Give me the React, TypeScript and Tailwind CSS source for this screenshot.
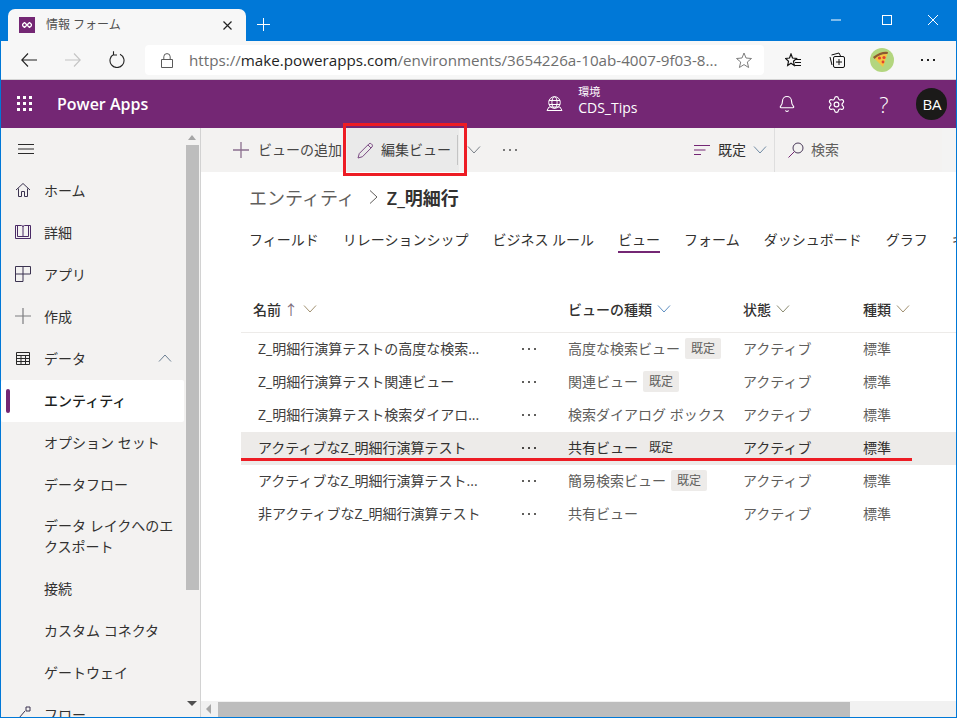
import React from "react";
import { Bell, Settings } from "lucide-react";

const FONT = "font-['Segoe_UI','Open_Sans','Noto_Sans_CJK_JP',sans-serif]";

function Chevron({ up = false, color = "#71808f", w = 14 }: { up?: boolean; color?: string; w?: number }) {
  return (
    <svg width={w} height="8" viewBox="0 0 14 8" className="shrink-0">
      <polyline points={up ? "1,7.5 7,1 13,7.5" : "1,0.5 7,7 13,0.5"} fill="none" stroke={color} strokeWidth="1" />
    </svg>
  );
}

function Dots({ color = "#605e5c" }: { color?: string }) {
  return (
    <svg width="16" height="4" viewBox="0 0 16 4">
      <rect x="1" y="1" width="2" height="2" fill={color} />
      <rect x="7" y="1" width="2" height="2" fill={color} />
      <rect x="13" y="1" width="2" height="2" fill={color} />
    </svg>
  );
}

function NavIcon({ name }: { name: string }) {
  const s = { fill: "none", stroke: "#3b3350", strokeWidth: 1 };
  if (name === "home")
    return (
      <svg width="16" height="16" viewBox="0 0 16 16">
        <path d="M1 8 L8 1.5 L15 8 M3.5 6.5 V14.5 H6.5 V9.5 H9.5 V14.5 H12.5 V6.5" {...s} />
      </svg>
    );
  if (name === "book")
    return (
      <svg width="16" height="16" viewBox="0 0 16 16">
        <path d="M.5 1.5 H6.5 Q8 1.5 8 3 V13 M15.5 1.5 H9.5 Q8 1.5 8 3 M.5 1.5 V14.5 H15.5 V1.5 M2.5 1.5 V12.5 H13.5 V1.5" fill="none" stroke="#4a2a66" strokeWidth="1" />
      </svg>
    );
  if (name === "app")
    return (
      <svg width="16" height="16" viewBox="0 0 16 16">
        <path d="M.5 .5 H15.5 V8 H8 V15.5 H.5 Z M.5 8 H8 M8 .5 V8" {...s} />
      </svg>
    );
  if (name === "plus")
    return (
      <svg width="16" height="16" viewBox="0 0 16 16">
        <path d="M8 0 V16 M0 8 H16" fill="none" stroke="#7d7d80" strokeWidth="1.2" />
      </svg>
    );
  if (name === "data")
    return (
      <svg width="14" height="13" viewBox="0 0 14 13">
        <path d="M.5 .5 H13.5 V12.5 H.5 Z M.5 3.5 H13.5 M.5 6.5 H13.5 M.5 9.5 H13.5 M5 3.5 V12.5 M9.5 3.5 V12.5" fill="none" stroke="#292929" strokeWidth="1" />
      </svg>
    );
  if (name === "flow")
    return (
      <svg width="16" height="16" viewBox="0 0 16 16">
        <path d="M1 12 H4 L10 5 M11 1 H15 V5 H11 Z" {...s} />
      </svg>
    );
  return null;
}

function NavRow({ icon, label, active, chev, h = "h-[42px]" }: { icon?: string; label: string; active?: boolean; chev?: boolean; h?: string }) {
  return (
    <div className={`relative shrink-0 flex items-center pb-[2px] ${h} ${active ? "bg-white rounded-[2px] font-medium text-[#201f1e] mr-[1px]" : "text-[#323130]"} text-[14px] leading-[21px]`}>
      {active && <span className="absolute left-[5px] top-[9px] w-[4px] h-[24px] rounded-full bg-[#742774]" />}
      <span className="w-[43px] shrink-0 flex justify-center pl-[9px] pr-[8px]">{icon && <NavIcon name={icon} />}</span>
      <span className="flex-1 pr-[7px]">{label}</span>
      {chev && (
        <span className="mr-[13px]">
          <Chevron up color="#6b7f93" />
        </span>
      )}
    </div>
  );
}

function Sidebar() {
  return (
    <div className="relative w-[199px] shrink-0 h-full bg-[#f3f2f1] flex overflow-hidden">
      <div className="w-[184px] shrink-0 flex flex-col">
        <div className="h-[42px] shrink-0 flex items-center pl-[17px]">
          <svg width="16" height="10" viewBox="0 0 16 10">
            <path d="M0 .5 H16 M0 5 H16 M0 9.5 H16" stroke="#2b2b2b" strokeWidth="1" />
          </svg>
        </div>
        <NavRow icon="home" label="ホーム" />
        <NavRow icon="book" label="詳細" />
        <NavRow icon="app" label="アプリ" />
        <NavRow icon="plus" label="作成" />
        <NavRow icon="data" label="データ" chev />
        <NavRow label="エンティティ" active />
        <NavRow label="オプション セット" />
        <NavRow label="データフロー" />
        <NavRow label="データ レイクへのエクスポート" h="h-[62px]" />
        <NavRow label="接続" h="h-[42px]" />
        <NavRow label="カスタム コネクタ" />
        <NavRow label="ゲートウェイ" />
        <NavRow icon="flow" label="フロー" />
      </div>
      <div className="w-[14px] shrink-0 flex flex-col items-center pt-[7px]">
        <span className="w-0 h-0 border-x-[4px] border-x-transparent border-b-[5px] border-b-[#a6a6a6] mb-[5px]" />
        <span className="w-[13px] h-[445px] bg-[#bdbdbd]" />
        <span className="mt-[111px] w-0 h-0 border-x-[5px] border-x-transparent border-t-[5px] border-t-[#505050]" />
      </div>
    </div>
  );
}

function CommandBar() {
  return (
    <div className="h-[44px] shrink-0 flex bg-[#f3f3f3]">
      <div className="w-[741px] flex items-center bg-[#f3f2f1] text-[14px] text-[#494847]">
        <span className="ml-[32px] flex items-center">
          <svg width="16" height="16" viewBox="0 0 16 16">
            <path d="M8 0 V16 M0 8 H16" stroke="#8b6f8f" strokeWidth="1.3" fill="none" />
          </svg>
        </span>
        <span className="ml-[9px] w-[89px] shrink-0 pb-[2px]">ビューの追加</span>
        <div className="w-[112px] h-[44px] bg-[#eaeaea] flex items-center relative">
          <svg width="17" height="17" viewBox="0 0 17 17" className="ml-[10px]">
            <path d="M1 16 L2.3 11.5 L12 1.8 Q13.2 .8 14.5 2 L15 2.5 Q16 3.8 15 5 L5.5 14.7 Z M11 3 L14 6" fill="none" stroke="#7b4a83" strokeWidth="1" />
          </svg>
          <span className="ml-[7px] text-[#3f3f3f] pb-[2px]">編集ビュー</span>
          <span className="absolute right-[1px] top-[7px] w-[1px] h-[30px] bg-[#c4c4c4]" />
        </div>
        <span className="ml-[8px]">
          <Chevron color="#7a8088" />
        </span>
        <span className="ml-[21px]">
          <Dots color="#7a7a7a" />
        </span>
        <span className="ml-[176px]">
          <svg width="16" height="12" viewBox="0 0 16 12">
            <path d="M0 1.5 H16 M0 6 H11.5 M0 10.5 H7" stroke="#742774" strokeWidth="1" fill="none" />
          </svg>
        </span>
        <span className="ml-[8px] text-[#323130] pb-[2px]">既定</span>
        <span className="ml-[7px]">
          <Chevron color="#6f8aa3" />
        </span>
        <span className="ml-[7px] w-[1px] h-[44px] bg-[#dedede]" />
        <span className="ml-[13px]">
          <svg width="16" height="16" viewBox="0 0 16 16">
            <circle cx="10" cy="6" r="5" fill="none" stroke="#4a3a5a" strokeWidth="1" />
            <path d="M6.5 9.5 L.5 15.5" stroke="#742774" strokeWidth="1" />
          </svg>
        </span>
        <span className="ml-[7px] text-[#605e5c] pb-[2px]">検索</span>
      </div>
    </div>
  );
}

function Badge({ children, bare }: { children: string; bare?: boolean }) {
  return (
    <span className={`ml-[5px] h-[21px] w-[36px] flex items-center justify-center text-[12px] rounded-[2px] text-[#605e5c] ${bare ? "text-[#323130]" : "bg-[#edebe9]"}`}>
      {children}
    </span>
  );
}

const rows = [
  { name: "Z_明細行演算テストの高度な検索...", view: "高度な検索ビュー", badge: true },
  { name: "Z_明細行演算テスト関連ビュー", view: "関連ビュー", badge: true },
  { name: "Z_明細行演算テスト検索ダイアロ...", view: "検索ダイアログ ボックス", badge: false },
  { name: "アクティブなZ_明細行演算テスト", view: "共有ビュー", badge: true, sel: true },
  { name: "アクティブなZ_明細行演算テスト...", view: "簡易検索ビュー", badge: true },
  { name: "非アクティブなZ_明細行演算テスト", view: "共有ビュー", badge: false },
];

const tabs = ["フィールド", "リレーションシップ", "ビジネス ルール", "ビュー", "フォーム", "ダッシュボード", "グラフ", "キー"];

const GRID = "grid grid-cols-[280px_47px_175px_120px_1fr] items-center";

function Table() {
  return (
    <div className="ml-[40px] mt-[30px]">
      <div className={`${GRID} h-[47px] border-b border-[#edebe9] text-[14px] font-medium text-[#323130]`}>
        <div className="flex items-center pl-[12px]">
          <span>名前</span>
          <span className="ml-[3px] text-[#7a6a78] font-normal">↑</span>
          <span className="ml-[5px]">
            <Chevron color="#a09070" />
          </span>
        </div>
        <div />
        <div className="flex items-center">
          <span>ビューの種類</span>
          <span className="ml-[5px]">
            <Chevron color="#5f8fc0" />
          </span>
        </div>
        <div className="flex items-center">
          <span>状態</span>
          <span className="ml-[5px]">
            <Chevron color="#8a8a70" />
          </span>
        </div>
        <div className="flex items-center">
          <span>種類</span>
          <span className="ml-[5px]">
            <Chevron color="#a09070" />
          </span>
        </div>
      </div>
      {rows.map((r) => (
        <div key={r.name} className={`${GRID} h-[33px] pb-[2px] text-[14px] ${r.sel ? "bg-[#edebe9] text-[#323130]" : "text-[#605e5c]"}`}>
          <div className={`pl-[17px] whitespace-nowrap ${r.sel ? "text-[#323130]" : "text-[#3f3e3d]"}`}>{r.name}</div>
          <div className="pt-[1px]">
            <Dots color={r.sel ? "#484644" : "#605e5c"} />
          </div>
          <div className="flex items-center whitespace-nowrap">
            <span>{r.view}</span>
            {r.badge && <Badge bare={r.sel}>既定</Badge>}
          </div>
          <div>アクティブ</div>
          <div>標準</div>
        </div>
      ))}
    </div>
  );
}

function Content() {
  return (
    <div className="flex-1 min-w-0 flex flex-col bg-white border-l border-[#d2d2d2] h-full overflow-hidden">
      <CommandBar />
      <div className="flex-1 min-h-0 overflow-hidden">
        <div className="h-[38px] flex items-end pl-[48px] text-[18px] leading-[24px] text-[#605e5c]">
          <span>エンティティ</span>
          <span className="ml-[14px] mr-[8px] mb-[6px]">
            <svg width="10" height="14" viewBox="0 0 10 14">
              <polyline points="1,.5 8,7 1,13.5" fill="none" stroke="#605e5c" strokeWidth="1" />
            </svg>
          </span>
          <span className="font-semibold text-[#323130]">Z_明細行</span>
        </div>
        <div className="mt-[16px] ml-[48px] flex gap-[24px] text-[14px] text-[#323130] whitespace-nowrap">
          {tabs.map((t) => (
            <div key={t} className="relative h-[30px] flex items-start pt-[3px] leading-[21px]">
              {t}
              {t === "ビュー" && <span className="absolute left-0 right-0 bottom-[3px] h-[2px] bg-[#742774]" />}
            </div>
          ))}
        </div>
        <Table />
      </div>
      <div className="h-[16px] shrink-0 bg-[#f1f1f1] flex items-center mt-auto">
        <span className="ml-[5px] w-0 h-0 border-y-[5px] border-y-transparent border-r-[5px] border-r-[#a6a6a6]" />
        <span className="ml-[7px] w-[632px] h-[15px] bg-[#bdbdbd]" />
      </div>
    </div>
  );
}

function Pizza() {
  return (
    <svg width="24" height="24" viewBox="0 0 24 24">
      <circle cx="12" cy="12" r="12" fill="#b3d67f" />
      <path d="M3 9 Q11 3 18 4 L13 19 Z" fill="#f5c443" />
      <path d="M3 9 Q11 3 18 4 L17.5 6 Q10 5.5 4.5 11 Z" fill="#8a5a33" />
      <circle cx="9.5" cy="10" r="1.6" fill="#e2442f" />
      <circle cx="14" cy="9.5" r="1.6" fill="#e2442f" />
      <circle cx="13" cy="14" r="1.4" fill="#e2442f" />
    </svg>
  );
}

function TitleBar() {
  return (
    <div className="h-[41px] shrink-0 flex items-end bg-[#0078d7] relative">
      <div className="ml-[7px] w-[238px] h-[32px] bg-[#f7f7f7] rounded-t-[7px] flex items-center">
        <span className="ml-[11px] w-[16px] h-[16px] bg-[#742774] flex items-center justify-center">
          <svg width="10" height="6" viewBox="0 0 10 6">
            <path d="M0 3 L2.5 .5 L5 3 L2.5 5.5 Z M5 3 L7.5 .5 L10 3 L7.5 5.5 Z" fill="none" stroke="#fff" strokeWidth="1.3" />
          </svg>
        </span>
        <span className="ml-[11px] text-[12px] text-[#505050]">情報 フォーム</span>
        <svg width="9" height="9" viewBox="0 0 9 9" className="ml-auto mr-[14px]">
          <path d="M.5 .5 L8.5 8.5 M8.5 .5 L.5 8.5" stroke="#222" strokeWidth="1.2" />
        </svg>
      </div>
      <svg width="13" height="13" viewBox="0 0 13 13" className="ml-[11px] mb-[10px]">
        <path d="M6.5 0 V13 M0 6.5 H13" stroke="#fff" strokeWidth="1" />
      </svg>
      <div className="ml-auto flex items-center self-start mt-[15px]">
        <svg width="10" height="2" viewBox="0 0 10 2" className="mr-[41px]">
          <path d="M0 1 H10" stroke="#fff" strokeWidth="1" />
        </svg>
        <svg width="10" height="10" viewBox="0 0 10 10" className="mr-[36px]">
          <rect x=".5" y=".5" width="9" height="9" fill="none" stroke="#fff" strokeWidth="1" />
        </svg>
        <svg width="10" height="10" viewBox="0 0 10 10" className="mr-[18px]">
          <path d="M0 0 L10 10 M10 0 L0 10" stroke="#fff" strokeWidth="1" />
        </svg>
      </div>
    </div>
  );
}

function Toolbar() {
  return (
    <div className="h-[39px] shrink-0 bg-[#f7f7f7] border-b border-[#d4d4d4] flex items-center">
      <svg width="16" height="14" viewBox="0 0 16 14" className="ml-[20px]">
        <path d="M7 .5 L.8 7 L7 13.5 M.8 7 H16" fill="none" stroke="#222" strokeWidth="1.1" />
      </svg>
      <svg width="16" height="14" viewBox="0 0 16 14" className="ml-[28px]">
        <path d="M9 .5 L15.2 7 L9 13.5 M15.2 7 H0" fill="none" stroke="#c4c4c4" strokeWidth="1.1" />
      </svg>
      <svg width="16" height="17" viewBox="0 0 16 17" className="ml-[28px] mb-[2px]">
        <path d="M5 3.2 A7 7 0 1 0 11 3.2 M4.5 .2 V4 H8" fill="none" stroke="#222" strokeWidth="1.1" />
      </svg>
      <div className="ml-[20px] w-[619px] h-[30px] bg-white rounded-[4px] flex items-center relative">
        <svg width="12" height="15" viewBox="0 0 12 15" className="ml-[16px]">
          <path d="M.5 6.5 H11.5 V14.5 H.5 Z M2.8 6.5 V3.8 A3.2 3.2 0 0 1 9.2 3.8 V6.5" fill="none" stroke="#5a5a5a" strokeWidth="1" />
        </svg>
        <span className="ml-[16px] text-[15.2px] whitespace-nowrap text-[#6e6e6e]">
          https://<span className="text-[#1f1f1f]">make.powerapps.com</span>/environments/3654226a-10ab-4007-9f03-8...
        </span>
        <svg width="17" height="17" viewBox="0 0 17 17" className="absolute right-[11px] top-[7px]">
          <path d="M8 1 L10 6 L15.5 6.5 L11.3 10 L12.6 15.5 L8 12.6 L3.4 15.5 L4.7 10 L.5 6.5 L6 6 Z" fill="none" stroke="#7d7d7d" strokeWidth="1" />
        </svg>
      </div>
      <svg width="16" height="15" viewBox="0 0 16 15" className="ml-[21px]">
        <path d="M6 1 L7.5 5 L11.5 5.5 L8.5 8.3 L9.3 12.5 L6 10.3 L2.7 12.5 L3.5 8.3 L.5 5.5 L4.5 5 Z" fill="none" stroke="#111" strokeWidth="1.2" />
        <path d="M10 6.5 H16 M10 9.5 H16 M10 12.5 H16" stroke="#111" strokeWidth="1" />
      </svg>
      <svg width="16" height="16" viewBox="0 0 16 16" className="ml-[28px]">
        <path d="M2.5 3 L10 1 L11.5 4 M1 5 L3 13" fill="none" stroke="#111" strokeWidth="1" />
        <rect x="4.5" y="4.5" width="11" height="11" rx="1.5" fill="#f7f7f7" stroke="#111" strokeWidth="1" />
        <path d="M10 7 V13 M7 10 H13" stroke="#111" strokeWidth="1" />
      </svg>
      <span className="ml-[25px]">
        <Pizza />
      </span>
      <span className="ml-[26px]">
        <Dots color="#222" />
      </span>
    </div>
  );
}

function AppBar() {
  return (
    <div className="h-[48px] shrink-0 bg-[#742774] flex items-center text-white">
      <svg width="16" height="16" viewBox="0 0 16 16" className="ml-[16px]">
        {[1, 7, 13].flatMap((y) => [1, 7, 13].map((x) => <rect key={`${x}${y}`} x={x - 1} y={y - 1} width="3" height="3" fill="#fff" />))}
      </svg>
      <span className="ml-[24px] text-[16px] font-semibold">Power Apps</span>
      <svg width="17" height="16" viewBox="0 0 17 16" className="ml-[398px]">
        <circle cx="8.5" cy="6.5" r="5.8" fill="none" stroke="#fff" strokeWidth="1" />
        <ellipse cx="8.5" cy="6.5" rx="2.6" ry="5.8" fill="none" stroke="#fff" strokeWidth="1" />
        <path d="M3 4.5 H14 M3 8.5 H14 M1 14.5 H16 L14 11 H3 Z" fill="none" stroke="#fff" strokeWidth="1" />
      </svg>
      <div className="ml-[15px] flex flex-col w-[60px] pb-[6px]">
        <span className="text-[11px] leading-[14px]">環境</span>
        <span className="text-[14px] leading-[18px]">CDS_Tips</span>
      </div>
      <Bell size={18} strokeWidth={1.5} className="ml-[140px]" />
      <Settings size={19} strokeWidth={1.5} className="ml-[31px]" />
      <span className="ml-[33px] text-[22px] font-light leading-none">?</span>
      <span className="ml-[28px] w-[31px] h-[32px] rounded-full bg-[#1b1a19] flex items-center justify-center text-[15px]">BA</span>
    </div>
  );
}

export default function App() {
  return (
    <div className={`relative w-[957px] h-[718px] overflow-hidden bg-[#0078d7] px-[1px] pb-[1px] flex flex-col ${FONT}`}>
      <TitleBar />
      <Toolbar />
      <AppBar />
      <div className="flex-1 min-h-0 flex">
        <Sidebar />
        <Content />
      </div>
      <div className="absolute left-[343px] top-[123px] w-[124px] h-[53px] border-[3px] border-[#ed1c24]" />
      <div className="absolute left-[241px] top-[458px] w-[671px] h-[3px] bg-[#ed1c24]" />
    </div>
  );
}
